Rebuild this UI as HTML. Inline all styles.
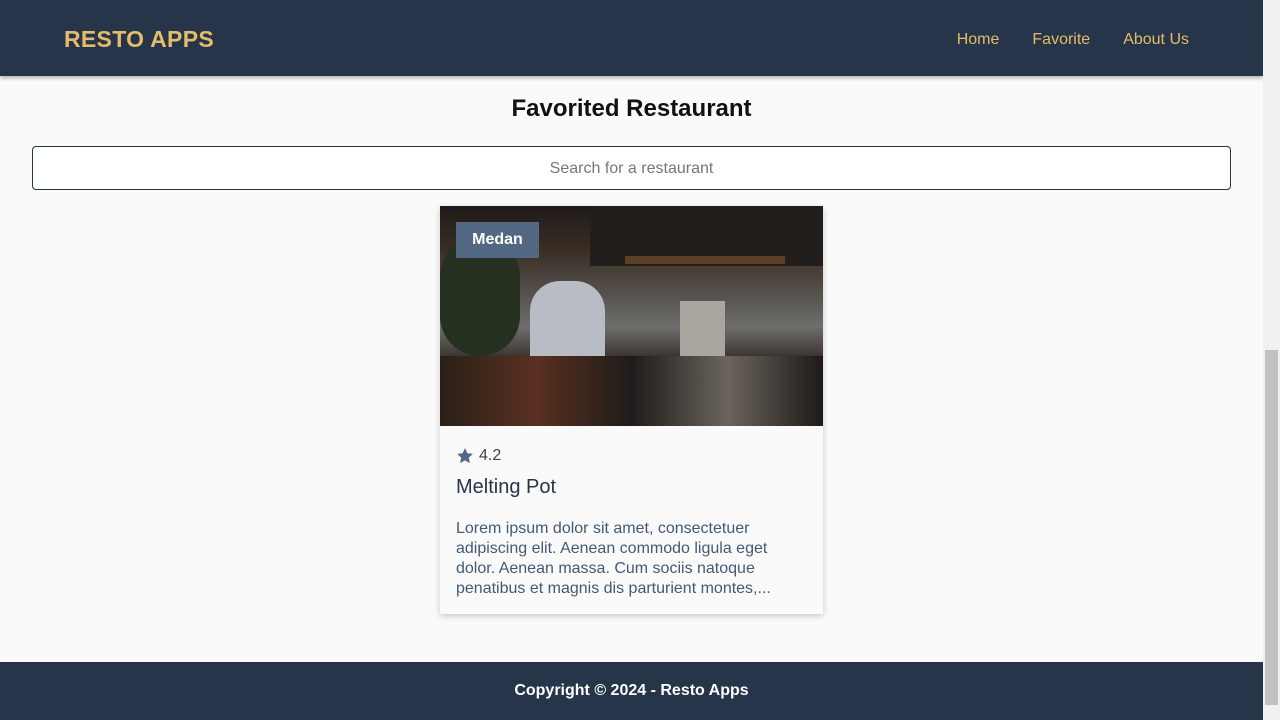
<!DOCTYPE html>
<html><head><meta charset="utf-8"><style>
*{box-sizing:border-box;margin:0;padding:0}
html,body{width:1280px;height:720px;overflow:hidden}
body{background:#fafafa;font-family:"Liberation Sans",sans-serif;position:relative}
header{position:absolute;left:0;top:0;width:1263px;height:76px;background:#263549;box-shadow:0 2px 4px rgba(0,0,0,.3)}
.logo{position:absolute;left:64px;top:26px;color:#e3bd6a;font-weight:bold;font-size:23px;letter-spacing:.3px}
nav{position:absolute;right:74px;top:31px;display:flex;gap:33px;color:#e3bd6a;font-size:16px}
h1{position:absolute;top:95px;left:0;width:1263px;text-align:center;font-size:24px;font-weight:bold;color:#111}
.search{position:absolute;left:32px;top:146px;width:1199px;height:44px;border:1px solid #263549;border-radius:4px;background:#fff;text-align:center;line-height:43px;color:#777;font-size:16px}
.card{position:absolute;left:440px;top:206px;width:383px;height:408px;background:#fafafa;box-shadow:0 2px 6px rgba(0,0,0,.2)}
.img{position:relative;height:220px;overflow:hidden;background:linear-gradient(180deg,#1e1a18 0%,#3a2e24 20%,#55524e 40%,#6e6e6c 55%,#2e2622 72%,#161312 100%)}
.tag{position:absolute;left:16px;top:16px;width:83px;height:36px;background:#526781;color:#fff;font-weight:bold;font-size:16px;text-align:center;line-height:36px}
.body{padding:20px 16px}
.rate{color:#444;font-size:16px;display:flex;align-items:center;gap:5px;height:20px}
.name{font-size:20px;color:#263549;margin-top:10px}
.desc{margin-top:20px;font-size:16px;line-height:20px;color:#435a73;height:80px;overflow:hidden}
footer{position:absolute;left:0;top:662px;width:1263px;height:58px;background:#263549;color:#fff;font-weight:bold;font-size:16px;text-align:center;line-height:58px}
.sb{position:absolute;right:0;top:0;width:17px;height:720px;background:#f1f1f1}
.sb div{position:absolute;left:2px;top:350px;width:13px;height:355px;background:#c1c1c1}
</style></head><body>
<header><div class="logo">RESTO APPS</div><nav><span>Home</span><span>Favorite</span><span>About Us</span></nav></header>
<h1>Favorited Restaurant</h1>
<div class="search">Search for a restaurant</div>
<div class="card">
<div class="img">
<div style="position:absolute;left:150px;top:0;width:233px;height:60px;background:#221e1b"></div>
<div style="position:absolute;left:185px;top:50px;width:160px;height:8px;background:#5a3e26"></div>
<div style="position:absolute;left:0;top:30px;width:80px;height:120px;background:#263020;border-radius:40px"></div>
<div style="position:absolute;left:90px;top:75px;width:75px;height:90px;background:#b8bcc4;border-radius:30px 30px 0 0"></div>
<div style="position:absolute;left:240px;top:95px;width:45px;height:70px;background:#a9a6a0"></div>
<div style="position:absolute;left:0;top:150px;width:383px;height:70px;background:linear-gradient(90deg,#2a2018,#5a3020,#1e1c1a,#6a645c,#1e1a18)"></div>
<div class="tag">Medan</div>
</div>
<div class="body">
<div class="rate"><svg width="18" height="18" viewBox="0 0 24 24"><path fill="#526781" d="M12 1.5l3.2 6.8 7.3.9-5.4 5 1.4 7.3L12 17.9l-6.5 3.6 1.4-7.3-5.4-5 7.3-.9z"/></svg>4.2</div>
<div class="name">Melting Pot</div>
<div class="desc">Lorem ipsum dolor sit amet, consectetuer adipiscing elit. Aenean commodo ligula eget dolor. Aenean massa. Cum sociis natoque penatibus et magnis dis parturient montes,...</div>
</div>
</div>
<footer>Copyright © 2024 - Resto Apps</footer>
<div class="sb"><div></div></div>
</body></html>
